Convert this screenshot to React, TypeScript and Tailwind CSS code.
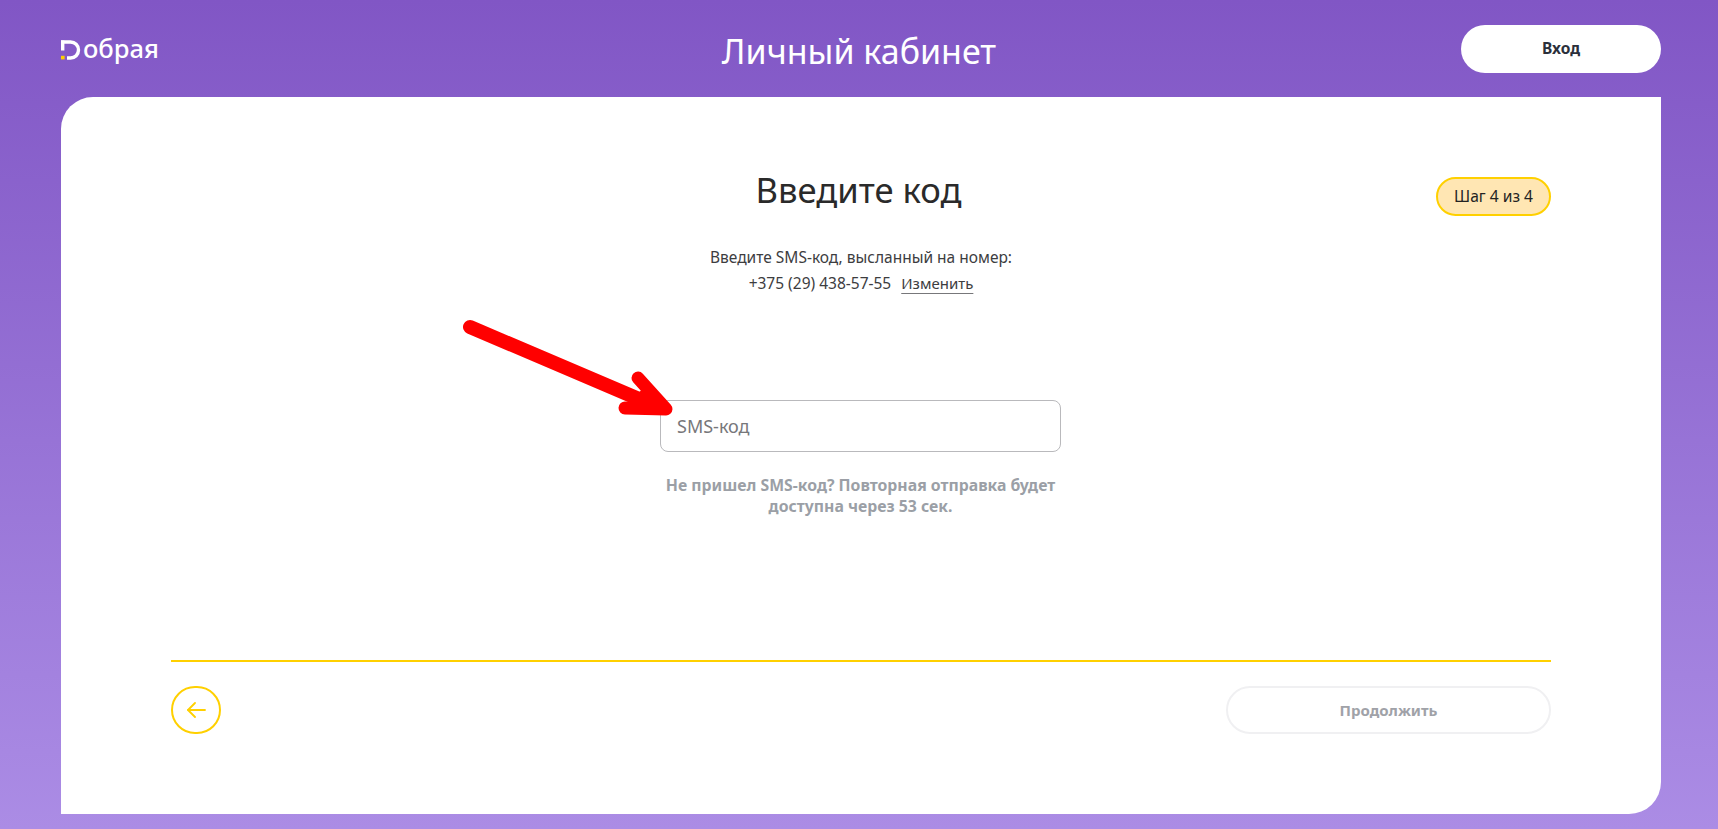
const font = "font-['Noto_Sans',sans-serif]";

function Logo() {
  return (
    <div className="flex items-center h-[24px]">
      <svg width="20" height="20" viewBox="0 0 20 20" fill="none" className="mt-[1px]">
        <path d="M0 2H9.5C14 2 17.5 5.4 17.5 10C17.5 14.6 14 18 9.5 18H6" stroke="#fff" strokeWidth="3.4" fill="none" />
        <rect x="0" y="0.5" width="3.4" height="10" fill="#fff" />
        <rect x="0" y="15.8" width="3.6" height="3.6" fill="#ffd000" />
      </svg>
      <span className="text-white text-[25.5px] leading-none font-medium ml-[2px]">обрая</span>
    </div>
  );
}

function RedArrow() {
  return (
    <svg width="220" height="110" viewBox="0 0 220 110" fill="none" className="absolute left-[-200px] top-[-82px] pointer-events-none">
      <path d="M10 9L200 90" stroke="#ff0000" strokeWidth="14" strokeLinecap="round" />
      <path d="M178 60L206 91L165 90" stroke="#ff0000" strokeWidth="13" strokeLinecap="round" strokeLinejoin="round" />
      <path d="M168 89L206 91L188 70Z" fill="#ff0000" stroke="#ff0000" strokeWidth="6" strokeLinejoin="round" />
    </svg>
  );
}

export default function App() {
  return (
    <div className={`${font} h-[829px] overflow-hidden bg-gradient-to-b from-[#8156c5] to-[#ab8ce5] pl-[61px] pr-[57px] flex flex-col`}>
      <header className="h-[97px] shrink-0 grid grid-cols-[1fr_auto_1fr] items-start">
        <div className="pt-[37px]"><Logo /></div>
        <h1 className="text-white text-[34px] leading-[44px] pt-[29px] font-normal pr-[4px]">Личный кабинет</h1>
        <div className="flex justify-end pt-[25px]">
          <button className="w-[200px] h-[48px] rounded-full bg-white text-[#2b303b] text-[15.5px] font-bold">Вход</button>
        </div>
      </header>

      <main className="h-[717px] shrink-0 bg-white rounded-tl-[32px] rounded-br-[32px] px-[110px] pt-[71px] flex flex-col">
        <div className="grid grid-cols-[1fr_auto_1fr] items-start">
          <div />
          <h2 className="text-[#2a2a2a] text-[34.6px] leading-[44px] font-normal pr-[5px]">Введите код</h2>
          <div className="flex justify-end pt-[9px]">
            <span className="h-[39px] w-[115px] rounded-full border-2 border-[#ffd000] bg-[#ffe6b3] text-[#232323] text-[15.6px] flex items-center justify-center">Шаг 4 из 4</span>
          </div>
        </div>

        <div className="mt-[28px] text-center text-[#3d3d3f] text-[15.5px] leading-[26px]">
          <p>Введите SMS-код, высланный на номер:</p>
          <p>
            +375 (29) 438-57-55
            <a className="ml-[10px] text-[15px] underline decoration-[#77777a] underline-offset-[4px]">Изменить</a>
          </p>
        </div>

        <div className="relative self-center w-[401px] mt-[104px] ml-[-1px]">
          <input
            placeholder="SMS-код"
            className="w-full h-[52px] rounded-[8px] border border-[#b9b9bc] px-[16px] text-[18px] bg-white outline-none placeholder:text-[#77777a]"
          />
          <RedArrow />
        </div>

        <p className="self-center w-[401px] ml-[-1px] mt-[23px] text-center text-[#9b9fa6] text-[15.8px] leading-[21px] font-bold">
          Не пришел SMS-код? Повторная отправка будет доступна через 53 сек.
        </p>

        <div className="mt-auto mb-[80px]">
          <div className="h-[2px] bg-[#ffd000]" />
          <div className="mt-[24px] flex items-center justify-between">
            <button className="w-[50px] h-[48px] rounded-full border-2 border-[#ffd000] flex items-center justify-center">
              <svg width="19" height="16" viewBox="0 0 19 16" fill="none" stroke="#ffd000" strokeWidth="1.8" strokeLinecap="round" strokeLinejoin="round">
                <path d="M1 8H18" />
                <path d="M8 1L1 8L8 15" />
              </svg>
            </button>
            <button className="w-[325px] h-[48px] rounded-full border-2 border-[#f0f0f2] text-[#a0a2a8] text-[15px] font-bold">Продолжить</button>
          </div>
        </div>
      </main>
    </div>
  );
}
